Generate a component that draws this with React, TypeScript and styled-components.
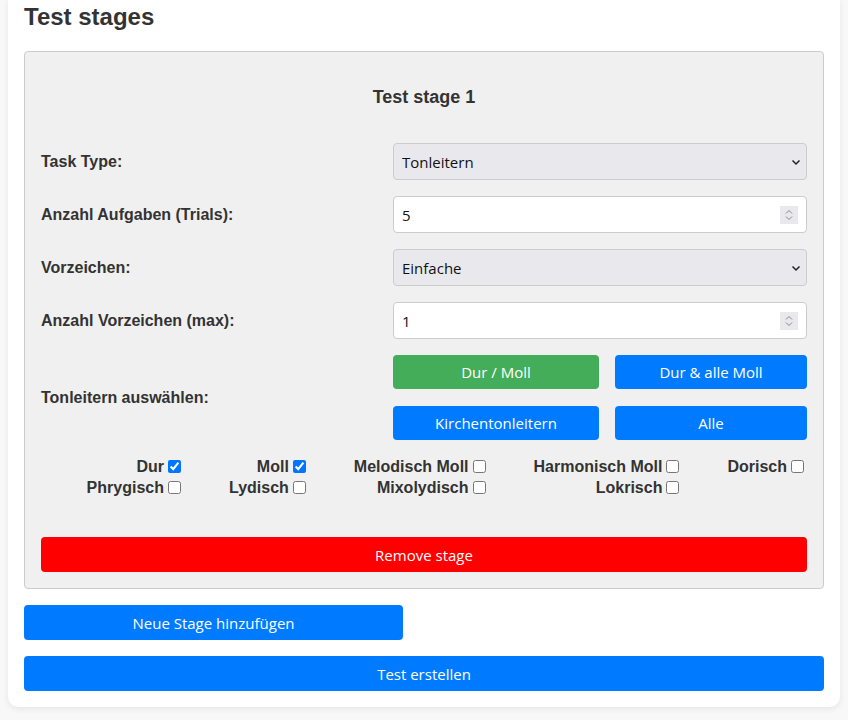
import React from "react";
import styled, { createGlobalStyle } from "styled-components";

const Global = createGlobalStyle`
  html, body { margin: 0; padding: 0; }
  body {
    background: #f8f8f8;
    font-family: "Liberation Sans", Arial, sans-serif;
    color: #333;
    padding: 0 8px 8px;
  }
`;

const Card = styled.div`
  background: #fff;
  border-radius: 0 0 10px 10px;
  box-shadow: 0 2px 6px rgba(0, 0, 0, 0.08);
  padding: 3px 16px 16px;
`;

const Title = styled.h2`
  margin: 0 0 20px;
  font-size: 24px;
  font-weight: bold;
  line-height: 28px;
  color: #333;
`;

const Stage = styled.div`
  background: #f0f0f0;
  border: 1px solid #ccc;
  border-radius: 4px;
  padding: 16px;
`;

const StageTitle = styled.h3`
  margin: 18px 0 35px;
  font-size: 18px;
  line-height: 22px;
  text-align: center;
  color: #333;
`;

const Row = styled.div`
  display: grid;
  grid-template-columns: 1fr 414px;
  align-items: center;
  margin-bottom: 16px;
`;

const Label = styled.label`
  font-size: 16px;
  font-weight: bold;
  color: #333;
`;

const FieldWrap = styled.div`
  position: relative;
`;

const ctrl = `
  box-sizing: border-box;
  width: 100%;
  height: 37px;
  border: 1px solid #ccc;
  border-radius: 4px;
  padding: 0 8px;
  font-family: "Open Sans", "Noto Sans", sans-serif;
  font-size: 15px;
  color: #111;
  outline: none;
`;

const Select = styled.select`
  ${ctrl}
  appearance: none;
  background: #e9e9ed;
`;

const NumInput = styled.input`
  ${ctrl}
  background: #fff;
  -moz-appearance: textfield;
  &::-webkit-inner-spin-button,
  &::-webkit-outer-spin-button {
    -webkit-appearance: none;
    margin: 0;
  }
`;

const Chevron = styled.svg`
  position: absolute;
  right: 6px;
  top: 50%;
  transform: translateY(-50%);
  pointer-events: none;
`;

const Spinner = styled.svg`
  position: absolute;
  right: 9px;
  top: 50%;
  transform: translateY(-50%);
  pointer-events: none;
`;

const ButtonGrid = styled.div`
  display: grid;
  grid-template-columns: 206fr 192fr;
  column-gap: 16px;
  row-gap: 17px;
`;

const Button = styled.button<{ $variant?: "blue" | "green" | "red"; $width?: string; $height?: number }>`
  box-sizing: border-box;
  height: ${(p) => p.$height || 35}px;
  border: none;
  border-radius: 4px;
  color: #fff;
  font-family: "Open Sans", "Noto Sans", sans-serif;
  font-size: 15px;
  cursor: pointer;
  background: ${(p) =>
    p.$variant === "green" ? "#43ad59" : p.$variant === "red" ? "#ff0000" : "#007bff"};
  width: ${(p) => p.$width || "100%"};
  display: block;
`;

const CheckGrid = styled.div`
  display: grid;
  grid-template-columns: repeat(5, auto);
  justify-content: end;
  justify-items: end;
  column-gap: 45px;
  row-gap: 0;
  margin: 14px 0 39px;
`;

const CheckItem = styled.label`
  display: flex;
  align-items: center;
  font-size: 16px;
  font-weight: bold;
  line-height: 21px;
  color: #333;
  input {
    margin: 0 3px 0 4px;
    width: 13px;
    height: 13px;
  }
`;

const Footer = styled.div`
  display: flex;
  flex-direction: column;
  gap: 16px;
  margin-top: 16px;
`;

const ChevronIcon = () => (
  <Chevron width="10" height="10" viewBox="0 0 10 10">
    <path d="M1.5 3.5 L5 7 L8.5 3.5" fill="none" stroke="#222" strokeWidth="1.5" />
  </Chevron>
);

const SpinIcon = () => (
  <Spinner width="18" height="18" viewBox="0 0 18 18">
    <rect width="18" height="18" fill="#e9e9ed" />
    <path d="M6 7.5 L9 4.5 L12 7.5 M6 10.5 L9 13.5 L12 10.5" fill="none" stroke="#888" strokeWidth="1" />
  </Spinner>
);

const checks: [string, boolean][] = [
  ["Dur", true],
  ["Moll", true],
  ["Melodisch Moll", false],
  ["Harmonisch Moll", false],
  ["Dorisch", false],
  ["Phrygisch", false],
  ["Lydisch", false],
  ["Mixolydisch", false],
  ["Lokrisch", false],
];

export default function App() {
  return (
    <>
      <Global />
      <Card>
        <Title>Test stages</Title>
        <Stage>
          <StageTitle>Test stage 1</StageTitle>
          <Row>
            <Label>Task Type:</Label>
            <FieldWrap>
              <Select defaultValue="Tonleitern">
                <option>Tonleitern</option>
              </Select>
              <ChevronIcon />
            </FieldWrap>
          </Row>
          <Row>
            <Label>Anzahl Aufgaben (Trials):</Label>
            <FieldWrap>
              <NumInput type="number" defaultValue={5} />
              <SpinIcon />
            </FieldWrap>
          </Row>
          <Row>
            <Label>Vorzeichen:</Label>
            <FieldWrap>
              <Select defaultValue="Einfache">
                <option>Einfache</option>
              </Select>
              <ChevronIcon />
            </FieldWrap>
          </Row>
          <Row>
            <Label>Anzahl Vorzeichen (max):</Label>
            <FieldWrap>
              <NumInput type="number" defaultValue={1} />
              <SpinIcon />
            </FieldWrap>
          </Row>
          <Row>
            <Label>Tonleitern auswählen:</Label>
            <ButtonGrid>
              <Button $variant="green" $height={34}>Dur / Moll</Button>
              <Button $height={34}>Dur &amp; alle Moll</Button>
              <Button $height={34}>Kirchentonleitern</Button>
              <Button $height={34}>Alle</Button>
            </ButtonGrid>
          </Row>
          <CheckGrid>
            {checks.map(([name, on]) => (
              <CheckItem key={name}>
                {name}
                <input type="checkbox" defaultChecked={on} />
              </CheckItem>
            ))}
          </CheckGrid>
          <Button $variant="red">Remove stage</Button>
        </Stage>
        <Footer>
          <Button $width="379px">Neue Stage hinzufügen</Button>
          <Button>Test erstellen</Button>
        </Footer>
      </Card>
    </>
  );
}
